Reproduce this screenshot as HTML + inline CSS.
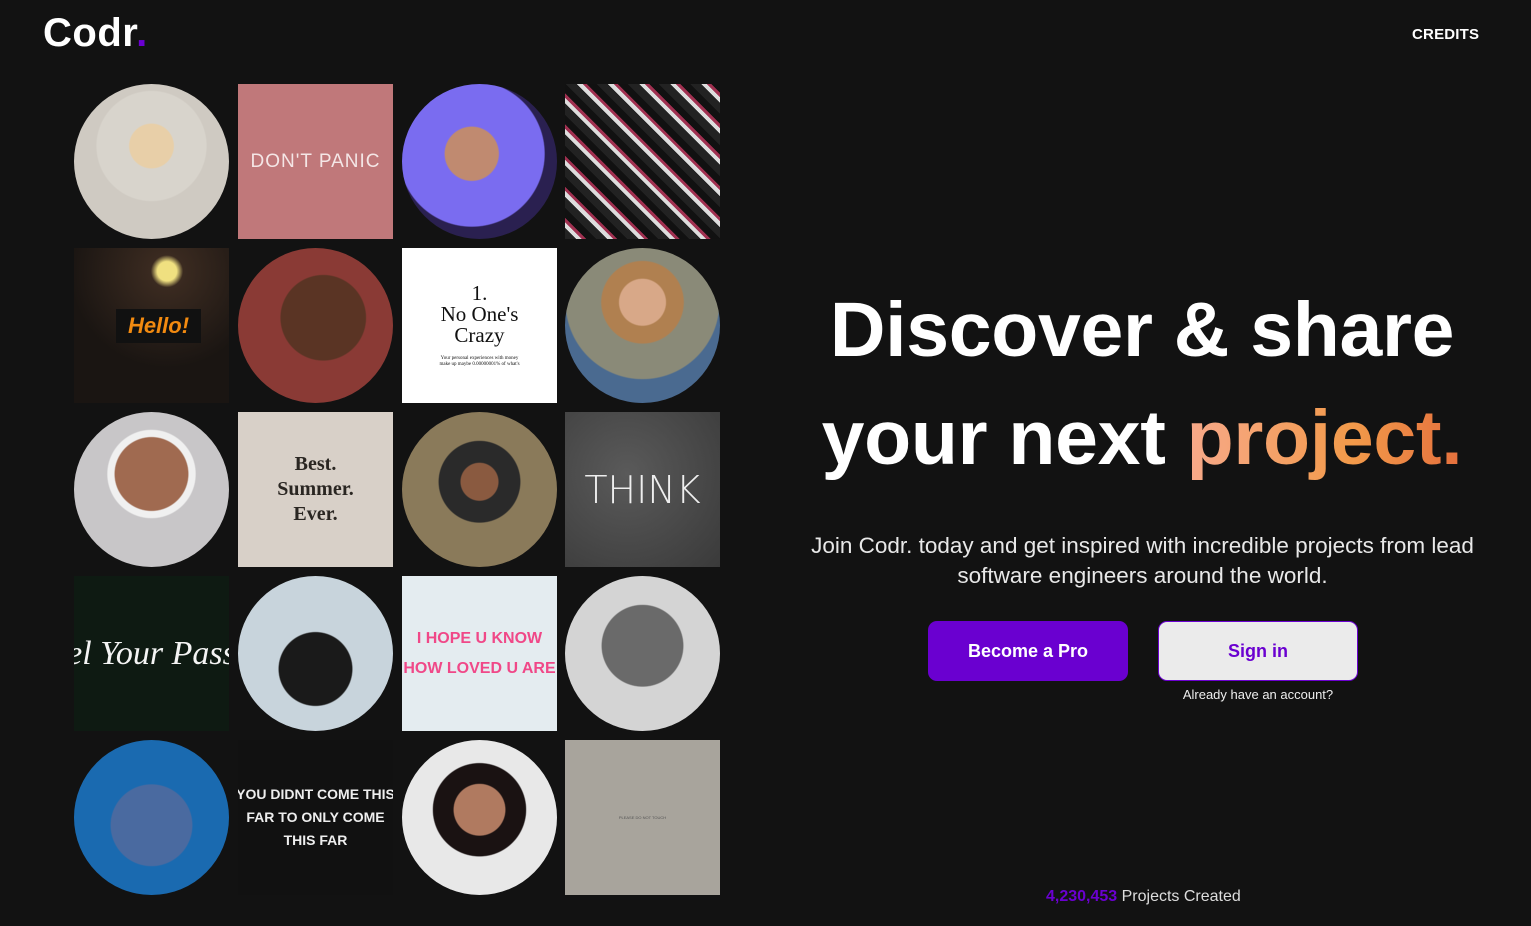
<!DOCTYPE html>
<html><head><meta charset="utf-8"><style>
*{margin:0;padding:0;box-sizing:border-box}
body{width:1531px;height:926px;background:#121212;font-family:"Liberation Sans",sans-serif;color:#fff;position:relative;overflow:hidden}
.logo{position:absolute;left:43px;top:11px;font-size:40px;font-weight:bold;letter-spacing:0.5px}
.logo span{color:#6a00d0}
.credits{position:absolute;left:1412px;top:26px;font-size:15px;font-weight:bold;letter-spacing:0.2px}
.t{position:absolute;width:155px;height:155px;overflow:hidden;display:flex;align-items:center;justify-content:center;text-align:center}
.c{border-radius:50%}
h1{position:absolute;left:742px;width:800px;text-align:center;font-size:77px;font-weight:bold;letter-spacing:-0.3px;line-height:108px;top:276px}
.grad{background:linear-gradient(90deg,#f7a98a,#f29a4a 60%,#e5703d);-webkit-background-clip:text;color:transparent}
.p{position:absolute;left:790px;width:705px;text-align:center;top:531px;font-size:22.5px;line-height:30px;color:#e8e8e8}
.b1{position:absolute;left:928px;top:621px;width:200px;height:60px;background:#6a00d0;border-radius:9px;font-size:18px;font-weight:bold;display:flex;align-items:center;justify-content:center}
.b2{position:absolute;left:1158px;top:621px;width:200px;height:60px;background:#ebebeb;border:1px solid #6a00d0;border-radius:9px;font-size:18px;font-weight:bold;color:#6a00d0;display:flex;align-items:center;justify-content:center}
.al{position:absolute;left:1158px;width:200px;text-align:center;top:687px;font-size:13px;color:#eee}
.cnt{position:absolute;left:1046px;top:888px;font-size:16px;color:#ddd}
.cnt b{color:#6a00d0}
</style></head><body>
<div class="logo">Codr<span>.</span></div>
<div class="credits">CREDITS</div>

<div class="t c" style="left:74px;top:84px;background:radial-gradient(circle at 50% 40%,#e8cfa8 0 18%,#d8d4cc 19% 45%,#cfcac2 46%)"></div>
<div class="t" style="left:238px;top:84px;background:#c0787a;color:#f4e6e6;font-size:19px;letter-spacing:1px">DON'T PANIC</div>
<div class="t c" style="left:402px;top:84px;background:radial-gradient(circle at 45% 45%,#c08a70 0 22%,#7a6cf0 23% 60%,#2a2050 61%)"></div>
<div class="t" style="left:565px;top:84px;background:repeating-linear-gradient(45deg,#222 0 8px,#ddd 8px 12px,#a03050 12px 15px,#111 15px 22px)"></div>

<div class="t" style="left:74px;top:248px;background:radial-gradient(circle at 60% 15%,#f0e080 0 6%,#3a2a20 10%,#1a1512 60%)"><div style="background:#111;color:#f28a10;font-weight:bold;font-style:italic;font-size:22px;padding:4px 12px;margin-left:14px">Hello!</div></div>
<div class="t c" style="left:238px;top:248px;background:radial-gradient(circle at 55% 45%,#5a3424 0 35%,#8a3a35 36%)"></div>
<div class="t" style="left:402px;top:248px;background:#fff;color:#111;font-family:'Liberation Serif',serif;font-size:21px;line-height:21px;flex-direction:column">1.<br>No One's<br>Crazy<div style="font-size:5px;line-height:6px;margin-top:10px">Your personal experiences with money<br>make up maybe 0.00000001% of what's</div></div>
<div class="t c" style="left:565px;top:248px;background:radial-gradient(circle at 50% 35%,#d8a888 0 18%,#b08050 19% 32%,#8a8a78 33% 60%,#4a6a90 61%)"></div>

<div class="t c" style="left:74px;top:412px;background:radial-gradient(circle at 50% 40%,#a06a50 0 30%,#f0f0f0 31% 36%,#c8c6c8 37%)"></div>
<div class="t" style="left:238px;top:412px;background:#d8d0c8;color:#2a2622;font-family:'Liberation Serif',serif;font-weight:bold;font-size:20px;line-height:25px">Best.<br>Summer.<br>Ever.</div>
<div class="t c" style="left:402px;top:412px;background:radial-gradient(circle at 50% 45%,#8a5a40 0 16%,#2a2a2a 17% 35%,#8a7a5a 36%)"></div>
<div class="t" style="left:565px;top:412px;background:radial-gradient(circle at 40% 40%,#5a5a5a,#3a3a3a);color:#eee;font-size:38px;font-family:'DejaVu Sans',sans-serif;font-weight:200">THINK</div>

<div class="t" style="left:74px;top:576px;background:#0e1a12;color:#f4f4f4;font-family:'Liberation Serif',serif;font-style:italic;font-size:34px;white-space:nowrap">el Your Pass</div>
<div class="t c" style="left:238px;top:576px;background:radial-gradient(circle at 50% 60%,#1a1a1a 0 30%,#c8d4dc 31%)"></div>
<div class="t" style="left:402px;top:576px;background:#e4ecf0;color:#f04888;font-size:16px;font-weight:bold;line-height:30px">I HOPE U KNOW<br>HOW LOVED U ARE</div>
<div class="t c" style="left:565px;top:576px;background:radial-gradient(circle at 50% 45%,#6a6a6a 0 35%,#d4d4d4 36%)"></div>

<div class="t c" style="left:74px;top:740px;background:radial-gradient(circle at 50% 55%,#4a6aa0 0 35%,#1a6ab0 36%)"></div>
<div class="t" style="left:238px;top:740px;background:#111;color:#eee;font-size:14px;line-height:23px;font-weight:bold;white-space:nowrap">YOU DIDNT COME THIS<br>FAR TO ONLY COME<br>THIS FAR</div>
<div class="t c" style="left:402px;top:740px;background:radial-gradient(circle at 50% 45%,#b07a60 0 22%,#1a1212 23% 40%,#e8e8e8 41%)"></div>
<div class="t" style="left:565px;top:740px;background:#a8a49c;color:#555;font-size:4px">PLEASE DO NOT TOUCH</div>

<h1>Discover &amp; share<br>your next <span class="grad">project.</span></h1>
<div class="p">Join Codr. today and get inspired with incredible projects from lead software engineers around the world.</div>
<div class="b1">Become a Pro</div>
<div class="b2">Sign in</div>
<div class="al">Already have an account?</div>
<div class="cnt"><b>4,230,453</b> Projects Created</div>
</body></html>
